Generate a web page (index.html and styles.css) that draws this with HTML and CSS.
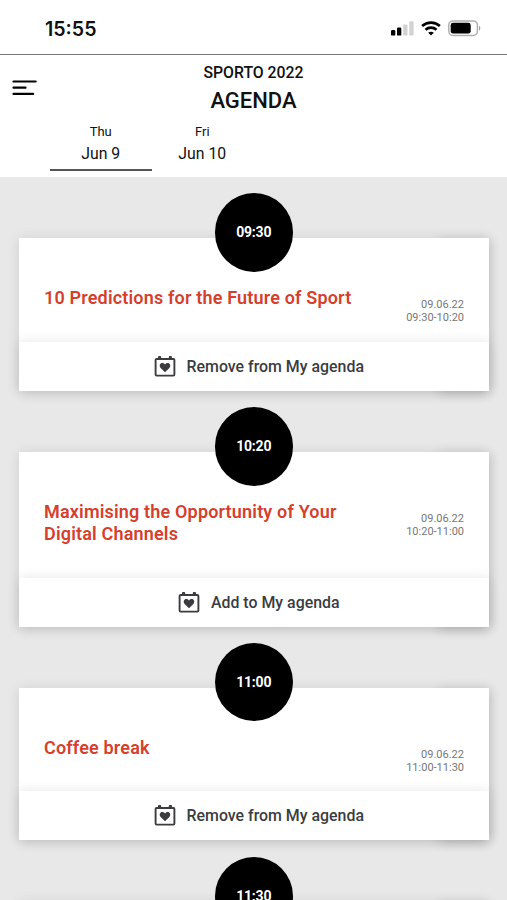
FILE: index.html
```html
<!DOCTYPE html>
<html lang="en">
<head>
    <meta charset="UTF-8">
    <meta name="viewport" content="width=device-width, initial-scale=1.0">
    <title>Agenda</title>
    <link rel="stylesheet" href="styles.css">
</head>
<body>
    <svg class="symbols" width="0" height="0">
        <symbol id="calendar" viewBox="0 0 22 21">
            <rect x="1.6" y="3" width="18.8" height="16.6" rx="1" fill="none" stroke="#3b3c40" stroke-width="1.9"/>
            <path d="M4 3V1.4a1.6 1.6 0 0 1 3.2 0V3zM14.8 3V1.4a1.6 1.6 0 0 1 3.2 0V3z" fill="#3b3c40"/>
            <path d="M11 16.2L6.6 11.9C4.8 9.9 5.9 7.1 8.4 7.1c1.1 0 2.1.6 2.6 1.5.5-.9 1.5-1.5 2.6-1.5 2.5 0 3.6 2.8 1.8 4.8z" fill="#3b3c40"/>
        </symbol>
    </svg>

    <div class="status-bar">
        <span class="clock">15:55</span>
        <div class="status-icons">
            <svg width="24" height="16" viewBox="0 0 24 16">
                <rect x="0" y="10" width="4.3" height="5.6" rx="1.2"/>
                <rect x="6" y="7.6" width="4.3" height="8" rx="1.2"/>
                <rect x="12.2" y="4.4" width="4.3" height="11.2" rx="1.2" fill="#d2d2d2"/>
                <rect x="18.3" y="1.2" width="4.3" height="14.4" rx="1.2" fill="#d2d2d2"/>
            </svg>
            <svg class="wifi" width="20" height="15" viewBox="0 0 20 15">
                <g fill="none" stroke="#000" stroke-width="2.7">
                    <path d="M1.1 5.1C6.2.5 13.8.5 18.9 5.1"/>
                    <path d="M4.5 8.8c3.2-2.8 7.8-2.8 11 0"/>
                </g>
                <path d="M10 14.5l-2.8-2.7c1.5-1.4 4.1-1.4 5.6 0z"/>
            </svg>
            <svg class="battery" width="33" height="17" viewBox="0 0 33 17">
                <rect x="0.8" y="0.9" width="28.6" height="14.6" rx="4.2" fill="#fff" stroke="#b0b0b0" stroke-width="1.5"/>
                <rect x="2.7" y="2.8" width="20" height="10.8" rx="2.4"/>
                <path d="M31 5.7c1.7.8 1.7 4.2 0 5z" fill="#a0a0a0"/>
            </svg>
        </div>
    </div>

    <div class="header">
        <svg class="menu" width="26" height="18" viewBox="0 0 26 18">
            <path d="M1.5 2.5h22.2M1.5 8.7h12M1.5 14.9h19.6" fill="none" stroke="#000" stroke-width="2.2" stroke-linecap="round"/>
        </svg>
        <div class="event">SPORTO 2022</div>
        <h1>AGENDA</h1>
        <div class="days">
            <div class="day active">
                <span class="weekday">Thu</span>
                <span class="date">Jun 9</span>
            </div>
            <div class="day">
                <span class="weekday">Fri</span>
                <span class="date">Jun 10</span>
            </div>
        </div>
    </div>

    <div class="agenda">
        <div class="slot">
            <div class="bubble">09:30</div>
            <div class="card">
                <div class="info">
                    <h2>10 Predictions for the Future of Sport</h2>
                    <div class="time">09.06.22<br>09:30-10:20</div>
                </div>
                <div class="action">
                    <svg width="22" height="21"><use href="#calendar"/></svg>
                    <span>Remove from My agenda</span>
                </div>
            </div>
        </div>
        <div class="slot">
            <div class="bubble">10:20</div>
            <div class="card">
                <div class="info">
                    <h2>Maximising the Opportunity of Your Digital Channels</h2>
                    <div class="time">09.06.22<br>10:20-11:00</div>
                </div>
                <div class="action">
                    <svg width="22" height="21"><use href="#calendar"/></svg>
                    <span>Add to My agenda</span>
                </div>
            </div>
        </div>
        <div class="slot">
            <div class="bubble">11:00</div>
            <div class="card">
                <div class="info">
                    <h2>Coffee break</h2>
                    <div class="time">09.06.22<br>11:00-11:30</div>
                </div>
                <div class="action">
                    <svg width="22" height="21"><use href="#calendar"/></svg>
                    <span>Remove from My agenda</span>
                </div>
            </div>
        </div>
        <div class="slot">
            <div class="bubble">11:30</div>
            <div class="card">
                <div class="info"></div>
            </div>
        </div>
    </div>
</body>
</html>
```
FILE: styles.css
```css
* {
    box-sizing: border-box;
}
body {
    margin: 0;
    height: 900px;
    overflow: hidden;
    display: flex;
    flex-direction: column;
    background-color: #e8e8e8;
    font-family: Roboto, sans-serif;
    color: #111;
}
.symbols {
    position: absolute;
}
.status-bar {
    flex: none;
    height: 55px;
    padding: 0 25px 0 45px;
    display: flex;
    justify-content: space-between;
    align-items: flex-start;
    background: white;
    border-bottom: 1.5px solid #777;
}
.clock {
    margin-top: 17px;
    font-family: Inter, sans-serif;
    font-size: 19.6px;
    line-height: 24px;
    font-weight: 600;
}
.status-icons {
    display: flex;
    margin-top: 20px;
    margin-right: 1px;
}
.wifi {
    margin: 1px 0 0 6px;
}
.battery {
    margin-left: 7px;
}
.header {
    flex: none;
    position: relative;
    height: 122px;
    padding-top: 8px;
    background: white;
    text-align: center;
}
.menu {
    position: absolute;
    left: 12px;
    top: 24px;
}
.event {
    font-size: 15.8px;
    line-height: 20px;
    font-weight: 500;
}
h1 {
    margin: 5px 0 0;
    font-size: 22px;
    line-height: 26px;
    font-weight: 500;
}
.days {
    display: flex;
    margin: 9px 0 0 50px;
}
.day {
    width: 101.5px;
    height: 48px;
    display: flex;
    flex-direction: column;
    border-bottom: 2px solid transparent;
}
.day.active {
    border-color: #555;
}
.weekday {
    font-size: 13px;
    line-height: 18px;
}
.date {
    margin-top: 2px;
    font-size: 15.8px;
    line-height: 22px;
}
.agenda {
    flex: 1;
    min-height: 0;
    overflow: hidden;
    padding: 16.2px 18.5px 0 19px;
}
.slot {
    margin-bottom: 16.2px;
}
.bubble {
    position: relative;
    z-index: 1;
    width: 78.5px;
    height: 78.5px;
    margin: 0 auto -33.5px;
    border-radius: 50%;
    background: black;
    color: white;
    font-size: 14px;
    line-height: 78px;
    font-weight: 700;
    letter-spacing: -0.2px;
    text-align: center;
}
.card {
    position: relative;
    background: white;
    box-shadow: 0 1px 12px rgba(0,0,0,0.11);
}
/* heavier shade under the right corner */
.card::before {
    content: "";
    position: absolute;
    z-index: -1;
    top: 0;
    right: 0;
    bottom: 0;
    width: 50px;
    box-shadow: 0 2px 11px rgba(0,0,0,0.15);
}
.info {
    padding: 49px 24.5px 32.9px 25px;
    display: flex;
    justify-content: space-between;
}
h2 {
    margin: 0;
    width: 325px;
    font-size: 18px;
    line-height: 21.8px;
    font-weight: 600;
    letter-spacing: 0.17px;
    color: #d43f2e;
}
.time {
    margin-bottom: -20px;
    padding-top: 11px;
    font-size: 11px;
    line-height: 13px;
    color: #777;
    text-align: right;
}
.action {
    height: 49px;
    padding-left: 10px;
    display: flex;
    justify-content: center;
    align-items: center;
    gap: 11px;
    background: white;
    box-shadow: 0 1px 12px rgba(0,0,0,0.12);
    font-size: 15.9px;
    font-weight: 500;
    color: #3b3c40;
}
.action svg {
    overflow: visible;
}
```
